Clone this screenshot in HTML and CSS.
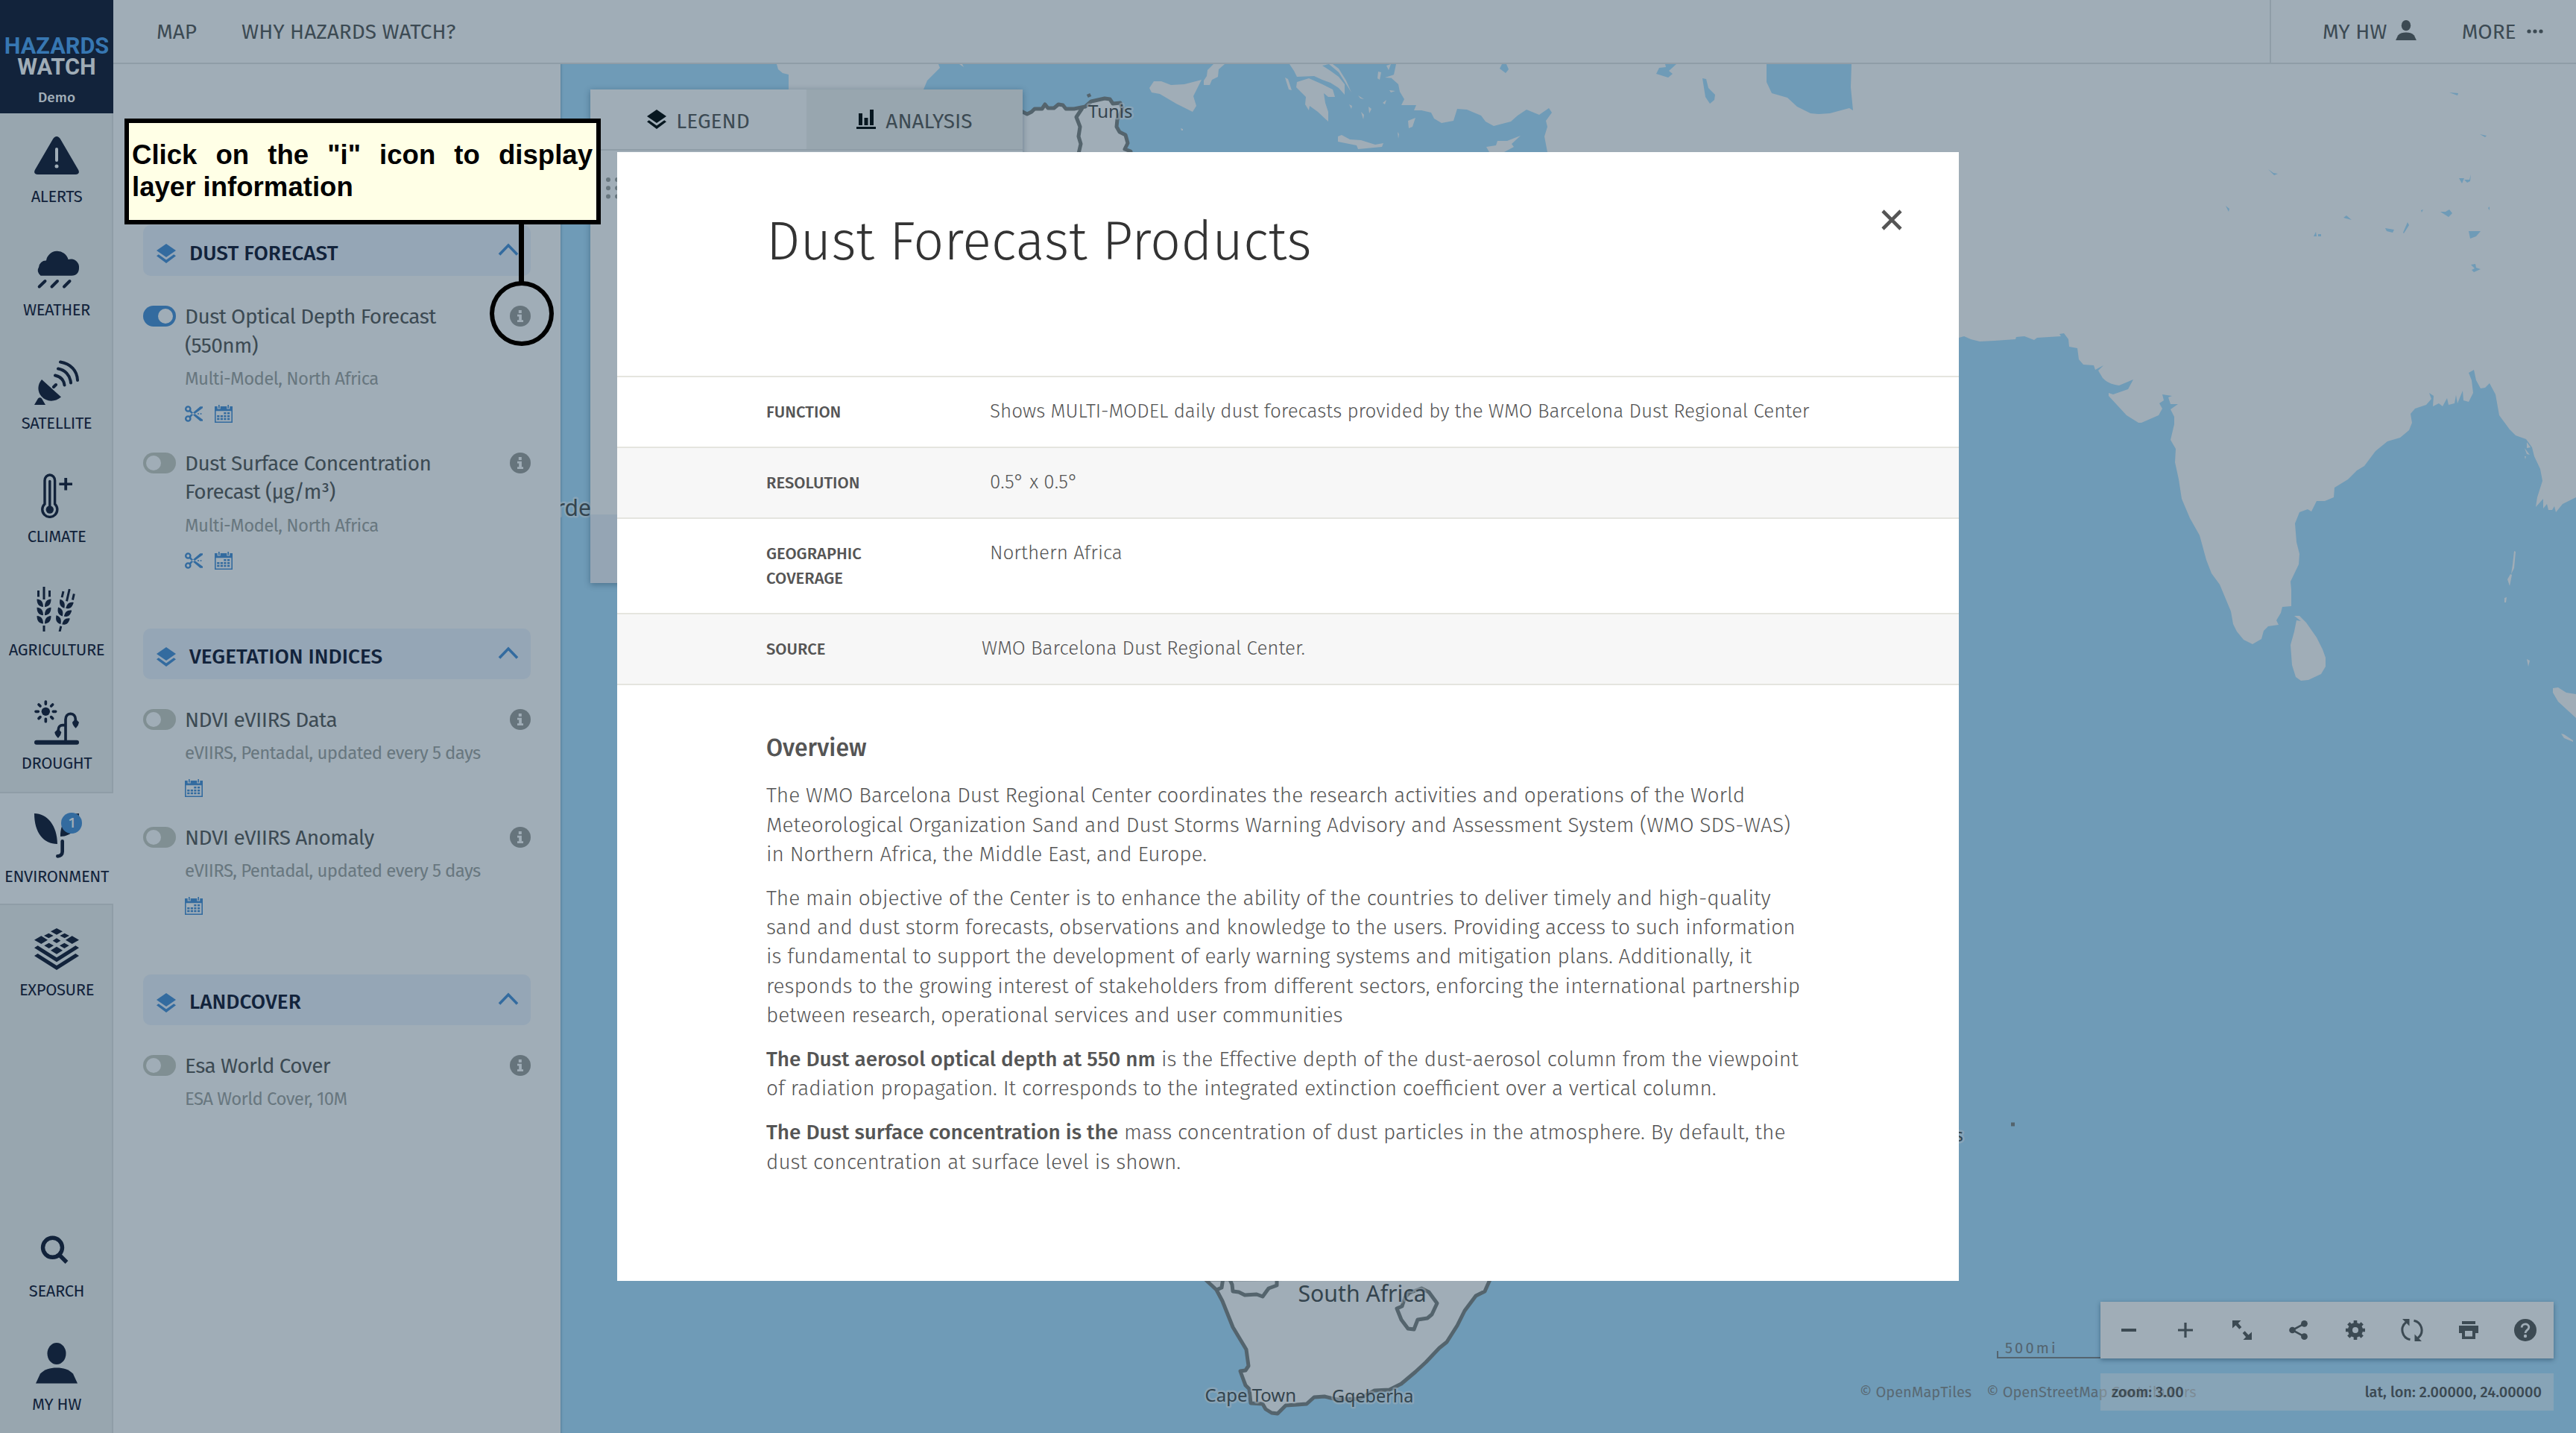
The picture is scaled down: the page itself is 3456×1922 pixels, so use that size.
FILE: index.html
```html
<!DOCTYPE html>
<html lang="en">
<head>
<meta charset="utf-8">
<title>Hazards Watch</title>
<link rel="stylesheet" href="styles.css">
</head>
<body>
<svg class="defs" aria-hidden="true">
  <symbol id="i-layers" viewBox="0 0 26 26"><path d="M13 0 26 9 13 18 0 9Z"/><path d="M0 16.3 2.8 14.3 13 21.6 23.2 14.3 26 16.3 13 26Z"/></symbol>
  <symbol id="i-chev" viewBox="0 0 28 18"><path d="M2 15.500 14 3 26 15.500" fill="none" stroke="currentColor" stroke-width="3.600"/></symbol>
  <symbol id="i-info" viewBox="0 0 28 28"><circle cx="14" cy="14" r="14"/><path class="cut" d="M11.800 6h4v4h-4zM10 11.800h5.900v7.400H18V22h-8v-2.800h2.200v-4.700H10z"/></symbol>
  <symbol id="i-cal" viewBox="0 0 24 24"><path fill-rule="evenodd" d="M0 2h3.700v3.600h4V2h8.600v3.600h4V2H24v22H0ZM1.600 8.300v14.100h20.800V8.300Z"/><path d="M5 0h1.600v4.500H5zM17.400 0H19v4.500h-1.600zM12.300 10h3.200v2.600h-3.200zM17 10h3.200v2.600H17zM3.200 13.900h3.200v2.600H3.200zM7.800 13.900H11v2.600H7.800zM12.300 13.900h3.200v2.600h-3.200zM17 13.900h3.200v2.600H17zM3.200 17.700h3.200v2.600H3.200zM7.800 17.700H11v2.600H7.800zM12.300 17.700h3.200v2.600h-3.200zM17 17.700h3.200v2.600H17z"/></symbol>
  <symbol id="i-cut" viewBox="0 0 24 24"><g fill="none" stroke="currentColor" stroke-width="2.400"><circle cx="4.300" cy="5.500" r="3.100"/><circle cx="4.300" cy="18.500" r="3.100"/></g><path d="M5.500 8.700 20.500 21.700H24v-2L9.500 9.200 7.500 6.200ZM5.500 15.300 20.500 2.300H24v2L9.500 14.800 7.500 17.800Z"/><path d="M17 11.200h2v1.600h-2zM20.500 11.200h2v1.600h-2z"/></symbol>
  <symbol id="i-user" viewBox="0 0 60 60"><ellipse cx="30" cy="16.500" rx="12.500" ry="14.500"/><path d="M2 56.500 8 43.500C14 37.500 21 35.500 30 35.500S46 37.500 52 43.500L58 56.500Z"/></symbol>
  <symbol id="i-wheat" viewBox="0 0 26 60"><path d="M11.500 0h3v17h-3zM11.500 52h3v8h-3zM4 5h3v8.500H4zM19 5h3v8.500h-3z"/><path id="ear" d="M3.500 16.500c6 .5 8.500 4 8.500 10.500-6-.5-8.500-4-8.500-10.500zM22.500 16.500c-6 .5-8.500 4-8.500 10.500 6-.5 8.500-4 8.500-10.500z"/><use href="#ear" y="11.200"/><use href="#ear" y="22.400"/></symbol>
</svg>

<div class="app">
  <nav class="rail">
    <div class="logo"><span class="logo-a">HAZARDS</span><span class="logo-b">WATCH</span><span class="logo-c">Demo</span></div>
    <a class="rail-item"><svg viewBox="0 0 60 60"><path d="M30 4q3 0 5 3.500L59.200 49q2.500 6-4 6H4.800q-6.500 0-4-6L25 7.500Q27 4 30 4z"/><path class="cut" d="M28 21q0-2 2-2t2 2v15q0 2-2 2t-2-2z"/><circle class="cut" cx="30" cy="44" r="2.500"/></svg><span>ALERTS</span></a>
    <a class="rail-item"><svg viewBox="0 0 60 60"><path d="M8.500 38.700A8.300 8.300 0 0 1 6 27.500 9.500 9.500 0 0 1 16 18.500 15 14.500 0 0 1 45.500 17 11 11 0 0 1 60 28.500C60 34 57 38.700 50 38.700Z"/><path class="ln w4" d="M14.500 46 6.700 53.500M31 46 23.500 53.500M47.500 46 40 53.500"/></svg><span>WEATHER</span></a>
    <a class="rail-item"><svg viewBox="0 0 60 60"><path d="M10 26 36 49.500C27 57 16 56 9.500 48.500 4 42 4 33 10 26ZM0 60 5 51.500Q7.500 49 10 51.500L15 60Z"/><path class="ln w4" d="M35 2.500C49 5 57.500 14 58 27M32 11.500c9 1.500 16 8.500 17 19M28 20.500c7 1.500 11.500 6 12.500 13M26 36 29 33"/></svg><span>SATELLITE</span></a>
    <a class="rail-item"><svg viewBox="0 0 60 60"><path class="ln w35" d="M14 41V9.500a6.800 7.500 0 0 1 13.600 0V41a10 10 0 1 1-13.600 0Z"/><circle cx="20.800" cy="48.500" r="5.200"/><path class="ln w35" d="M20.800 48V10.500"/><path d="M40.300 6h3.800v6.500H51v3.500h-6.900v6.500h-3.800V16h-6.900v-3.500h6.900z"/></svg><span>CLIMATE</span></a>
    <a class="rail-item"><svg viewBox="0 0 60 60"><use href="#i-wheat" width="26" height="60"/><g transform="translate(34 60.500) rotate(13)"><use href="#i-wheat" x="-13" y="-59" width="26" height="59"/></g></svg><span>AGRICULTURE</span></a>
    <a class="rail-item"><svg viewBox="0 0 180 180"><circle cx="46" cy="46" r="17"/><path class="ln w11" d="M46 6v10M46 76v10M6 46h10M76 46h10M18 18l6 6M68 68l6 6M18 74l6-6M68 24l6-6"/><path class="ln w18" d="M9 170h162"/><path class="ln w11" d="M126 165V78c0-14 8-23 20-23s20 9 20 23v10M126 101h-12c-10 0-17 7-17 17v10"/><path d="M166 76 180 89Q179 101 167 113 154 101 153 89ZM96 116 109 129Q108 141 96 153 83 141 82 129Z"/></svg><span>DROUGHT</span></a>
    <a class="rail-item active"><svg viewBox="0 0 180 180"><path d="M0 0C52 0 93 50 93 123 38 123 0 78 0 0ZM105 93C105 36 134 0 180 0 180 58 150 93 105 93Z"/><path class="ln w14" d="M113 112v42c0 12-8 18-19 18"/></svg><b class="badge">1</b><span>ENVIRONMENT</span></a>
    <a class="rail-item"><svg viewBox="0 0 180 180"><path d="M90 6 114 19 90 32 66 19ZM58 26 77 36 58 46 39 36ZM122 26 141 36 122 46 103 36ZM28 37 54 53 28 69 0 53ZM152 37 180 53 152 69 126 53ZM90 46 106 56 90 66 74 56ZM59 65 78 76 59 87 40 76ZM121 65 140 76 121 87 102 76ZM90 80 114 95 90 110 66 95ZM0 85 14 76 90 124 166 76 180 85 90 142ZM0 117 14 108 90 156 166 108 180 117 90 174Z"/></svg><span>EXPOSURE</span></a>
    <div class="rail-gap"></div>
    <a class="rail-item"><svg viewBox="0 0 60 60"><circle class="ln w55" cx="24.500" cy="26.300" r="13"/><path class="ln w55 butt" d="M34 36.500 43.500 46"/></svg><span>SEARCH</span></a>
    <a class="rail-item"><svg viewBox="0 0 60 60"><use href="#i-user"/></svg><span>MY HW</span></a>
  </nav>

  <div class="main">
    <header class="topbar">
      <a>MAP</a><a>WHY HAZARDS WATCH?</a>
      <div class="topbar-right">
        <a>MY HW <svg class="t-user" viewBox="2 2 56 54.500"><use href="#i-user" width="60" height="60"/></svg></a>
        <a class="more">MORE <svg class="t-dots" viewBox="0 0 22 6"><circle cx="3" cy="3" r="2.600"/><circle cx="11" cy="3" r="2.600"/><circle cx="19" cy="3" r="2.600"/></svg></a>
      </div>
    </header>

    <div class="work">
      <aside class="panel">
        <h2 class="group"><svg class="g-ic"><use href="#i-layers"/></svg>DUST FORECAST<svg class="g-ch"><use href="#i-chev"/></svg></h2>
        <div class="layer"><i class="toggle on"></i><div class="layer-body"><h3>Dust Optical Depth Forecast (550nm)</h3><p>Multi-Model, North Africa</p><div class="tools"><svg><use href="#i-cut"/></svg><svg><use href="#i-cal"/></svg></div></div><svg class="info"><use href="#i-info"/></svg></div>
        <div class="layer"><i class="toggle"></i><div class="layer-body"><h3>Dust Surface Concentration Forecast (µg/m³)</h3><p>Multi-Model, North Africa</p><div class="tools"><svg><use href="#i-cut"/></svg><svg><use href="#i-cal"/></svg></div></div><svg class="info"><use href="#i-info"/></svg></div>
        <h2 class="group"><svg class="g-ic"><use href="#i-layers"/></svg>VEGETATION INDICES<svg class="g-ch"><use href="#i-chev"/></svg></h2>
        <div class="layer"><i class="toggle"></i><div class="layer-body"><h3>NDVI eVIIRS Data</h3><p>eVIIRS, Pentadal, updated every 5 days</p><div class="tools"><svg><use href="#i-cal"/></svg></div></div><svg class="info"><use href="#i-info"/></svg></div>
        <div class="layer"><i class="toggle"></i><div class="layer-body"><h3>NDVI eVIIRS Anomaly</h3><p>eVIIRS, Pentadal, updated every 5 days</p><div class="tools"><svg><use href="#i-cal"/></svg></div></div><svg class="info"><use href="#i-info"/></svg></div>
        <h2 class="group"><svg class="g-ic"><use href="#i-layers"/></svg>LANDCOVER<svg class="g-ch"><use href="#i-chev"/></svg></h2>
        <div class="layer"><i class="toggle"></i><div class="layer-body"><h3>Esa World Cover</h3><p>ESA World Cover, 10M</p></div><svg class="info"><use href="#i-info"/></svg></div>
      </aside>

      <section class="map">
        <svg class="map-canvas" viewBox="752 86 2704 1836">
          <g class="land">
            <path d="M1873 86 1870 100 1867 105 1876 113 1878 123 1884 133 1880 141 1900 141 1897 148 1907 148 1920 151 1924 159 1934 165 1950 162 1955 146 1968 147 1987 155 1993 163 2004 169 2027 163 2036 155 2048 147 2065 154 2078 145 2082 151 2074 162 2076 170 2072 183 2076 204 2200 400 2628 453 2635 451 2644 455 2656 458 2676 457 2704 455 2705 452 2716 451 2729 456 2733 453 2765 451 2763 448 2769 447 2775 455 2776 465 2787 467 2789 482 2795 489 2809 490 2811 496 2822 490 2815 497 2821 507C2828 514 2835 516 2843 517L2862 509 2855 522 2835 529 2829 527 2829 531 2853 557 2869 567 2873 567 2896 557 2901 548 2897 541 2903 537 2901 529 2914 531 2909 533 2912 542 2922 542 2912 549 2917 559 2917 569 2912 590 2919 602 2918 620 2923 643 2927 669 2938 695 2951 718 2960 751 2967 769 2978 784 2993 820 2996 837 3001 847 3010 858 3022 864 3034 857 3037 846 3043 840 3057 838 3054 832 3060 822 3062 814 3074 813 3074 791 3073 780 3084 757 3085 743 3081 727 3079 702 3085 687 3096 683 3101 686 3108 672 3119 672 3131 667 3132 654 3150 643 3162 631 3172 625 3187 605 3203 592 3220 587 3232 577 3236 567 3234 555 3240 548 3255 543 3262 535 3259 527 3265 531 3264 545 3272 541 3277 545 3283 534 3285 543 3293 541 3295 530 3297 541 3304 524 3305 537 3312 539 3318 527 3316 510 3312 500 3319 496 3322 510 3328 521 3334 520 3340 514 3348 529 3353 557 3367 576 3375 584 3389 589 3397 600 3400 612 3408 629 3411 645 3404 667 3402 680 3412 669 3412 682 3417 676 3419 684 3424 684 3427 679 3429 687 3438 676 3456 667V86Z"/>
            <path d="M3078 826 3085 826 3094 835 3108 855 3116 871 3120 882 3120 894 3114 904 3097 912 3087 913 3080 908 3075 892 3073 865 3078 847 3081 832 3087 833Z"/>
            <path d="M3373 739 3375 740 3373 762 3369 770 3371 757ZM3368 770 3370 771 3367 786 3364 777ZM3360 802 3363 801 3362 808H3360ZM3390 884 3394 886 3392 894ZM3390 593 3395 600 3390 601ZM3387 601 3394 610 3390 609ZM3387 612 3389 612 3388 616ZM3425 923 3432 922 3443 929 3456 931V963L3432 941 3425 929ZM3436 984 3440 985 3452 993V995L3440 990Z"/>
            <path d="M1994 197 2007 195 2009 189 2022 189 2040 182 2028 193 2031 197 2018 204H1998ZM1795 183 1800 181 1811 187 1826 188 1845 194 1856 192 1854 197 1822 200 1820 195 1795 190ZM1542 118 1548 109 1558 109 1571 114 1589 113 1612 107 1601 129 1605 142 1600 150 1578 139 1556 126 1545 124ZM1628 86H1643L1635 93 1634 103 1626 107 1623 114 1615 114 1615 108 1619 102 1620 94Z"/>
            <path d="M1730 86 1736 95 1740 103 1763 102 1774 107 1785 111 1796 118 1804 127 1804 113 1796 103 1785 95 1774 88 1783 86ZM1740 110 1756 105 1774 113 1788 120 1791 130 1782 130 1776 125 1778 138 1782 150 1782 163 1768 150 1757 142 1756 148 1751 140 1752 130 1739 117ZM1783 86 1796 97 1803 108 1813 124 1806 108 1796 92 1788 86ZM1724 104 1728 106 1733 121 1729 120ZM1849 96 1853 97 1851 107 1848 105ZM1858 104 1874 99 1872 105ZM1864 121 1872 122 1866 124ZM1889 162 1899 158 1895 170 1890 172ZM1875 177 1877 180 1876 186ZM1822 128 1830 133 1825 132ZM1836 143 1840 146 1837 152ZM1810 140 1814 142 1813 146ZM1826 150 1830 154 1829 160ZM1855 138 1860 134 1858 140ZM1860 88 1866 86 1863 94ZM1584 172 1587 173 1587 175 1585 175Z"/>
            <path d="M1042 86 1044 93 1050 98 1058 100 1058 120 1239 120 1244 108 1261 91 1259 86ZM1287 86H1291L1293 90Z"/>
          </g>
          <g class="land edge">
            <path d="M1368 148 1378 153 1384 150 1388 146 1398 146 1402 140 1406 145 1414 145 1420 140 1426 141 1430 146 1441 146 1456 143 1464 136 1482 132 1489 133 1493 139 1503 138 1506 147 1499 160 1498 170 1502 177 1510 181 1513 192 1509 200 1517 203V210H1368Z"/>
            <path d="M1617 1716 1632 1730 1640 1745 1646 1760 1654 1780 1672 1810 1675 1832 1671 1838 1664 1839 1668 1850 1671 1858 1676 1863 1678 1882 1694 1883 1698 1890 1706 1895 1714 1896 1725 1885 1740 1884 1753 1883 1763 1874 1777 1873 1793 1877 1824 1876 1844 1865 1864 1864 1880 1856 1899 1840 1913 1827 1931 1808 1941 1800 1955 1778 1965 1758 1980 1738 1992 1732 2000 1714Z"/>
            <path d="M1885 1740 1891 1734 1907 1728 1917 1733 1928 1748 1921 1763 1915 1768 1902 1770 1897 1783 1889 1782 1880 1770 1874 1755 1881 1752Z"/>
            <path d="M1452 145 1444 157 1449 170 1447 183 1450 193 1447 206M1632 1730 1639 1727 1641 1714M1649 1714 1653 1723 1654 1732 1662 1733 1670 1737 1686 1736 1694 1739 1702 1728 1713 1724 1713 1714M1460 126 1462 130"/>
          </g>
          <g class="water">
            <path d="M2370 86 2370 110 2377 125 2398 131 2411 143 2429 152 2440 153 2455 152 2481 145 2486 148 2483 117 2484 86ZM2284 105 2289 106 2292 118 2301 127 2300 134 2294 139 2288 130ZM2226 91 2235 90 2234 86H2249L2239 95 2244 99 2238 104 2222 99ZM2015 86 2012 92 2020 98 2024 93 2021 86Z"/>
            <path d="M3286 124 3298 125 3297 128ZM3327 180 3336 182 3334 184ZM3043 227 3050 232 3056 233 3051 235ZM3299 239 3306 239 3303 246ZM3306 241 3313 241 3315 234 3314 243 3310 245ZM2986 276 2991 280 2990 284ZM3274 284 3281 284 3286 281 3290 286 3285 291ZM3144 292 3148 289 3155 295ZM3200 306 3212 308 3210 312 3202 310ZM3224 312 3230 298 3232 302 3225 313ZM3104 317 3107 311 3108 317ZM3110 314H3114V317H3110ZM3312 310 3328 310 3322 317 3314 320ZM3315 355 3321 354 3322 359 3328 361 3319 365 3316 362 3320 360ZM3338 279 3340 277 3340 282ZM3248 282 3251 281 3249 285Z"/>
          </g>
          <path class="edge" d="M2698 1508h5"/>
          <g class="labels">
            <text x="1741.500" y="1746" font-size="30.200">South Africa</text>
            <text x="1616.500" y="1880" font-size="24">Cape Town</text>
            <text x="1787" y="1881" font-size="23.400">Gqeberha</text>
            <text x="1460" y="157.500" font-size="24">Tunis</text>
            <text x="793" y="692" font-size="30" text-anchor="end">rde</text>
            <text x="2634" y="1531" font-size="24" text-anchor="end">s</text>
          </g>
        </svg>

        <div class="legend">
          <div class="tabs">
            <div class="tab"><svg><use href="#i-layers"/></svg>LEGEND</div>
            <div class="tab off"><svg viewBox="0 0 26 26"><path d="M0 23h26v3H0zM3 5h5v16H3zM10.500 11h5v10h-5zM18 0h5v21h-5z"/></svg>ANALYSIS</div>
          </div>
          <div class="legend-body"><svg class="grip" viewBox="0 0 30 30"><circle cx="3" cy="3" r="3"/><circle cx="15" cy="3" r="3"/><circle cx="3" cy="14.200" r="3"/><circle cx="15" cy="14.200" r="3"/><circle cx="3" cy="25.500" r="3"/><circle cx="15" cy="25.500" r="3"/></svg></div>
          <div class="legend-foot"></div>
        </div>

        <div class="attrib"><span>© OpenMapTiles</span><span>© OpenStreetMap Contributors</span></div>
        <div class="scale">500mi</div>
        <div class="controls">
          <div class="buttons">
            <svg viewBox="0 0 30 30"><path d="M5 13h20v4H5z"/></svg>
            <svg viewBox="0 0 30 30"><path d="M5 13.400h8.400V5h3.200v8.400H25v3.200h-8.400V25h-3.200v-8.400H5z"/></svg>
            <svg viewBox="0 0 30 30"><path d="M2 2h11.500l-3.700 3.700 4.500 5.300-3 2.700L6.500 8.500 2 12.500zM28 28H16.500l3.700-3.700-4.500-5.300 3-2.700 4.800 5.200 4.500-4z"/></svg>
            <svg viewBox="0 0 30 30"><circle cx="6.500" cy="15" r="4.300"/><circle cx="22.500" cy="6.300" r="4.400"/><circle cx="22.500" cy="23.700" r="4.400"/><path d="M22.500 6.300 6.500 15l16 8.700" fill="none" stroke="currentColor" stroke-width="2.600"/></svg>
            <svg viewBox="0 0 30 30"><circle cx="15" cy="15" r="7" fill="none" stroke="currentColor" stroke-width="6"/><path d="M15 2v5M15 23v5M2 15h5M23 15h5M5.800 5.800l3.500 3.500M20.700 20.700l3.500 3.500M5.800 24.200l3.500-3.500M20.700 9.300l3.500-3.500" stroke="currentColor" stroke-width="4.600"/></svg>
            <svg viewBox="0 0 30 30"><path d="M12.500 27.800A13.200 13.200 0 0 1 7 4.500M17.500 2.200A13.200 13.200 0 0 1 23 25.500" fill="none" stroke="currentColor" stroke-width="3"/><path d="M2 0h9.500v9.500L8.500 6.500ZM28 30h-9.500v-9.500l3 3Z"/></svg>
            <svg viewBox="0 0 30 30"><path fill-rule="evenodd" d="M6 3h18v4H6zM2 9h26v10h-4v8H6v-8H2zM10 16v7.500h10V16Z"/></svg>
            <svg viewBox="0 0 30 30"><circle cx="15" cy="15" r="15"/><path class="cutln" d="M10.200 11.500c0-6 9.600-6 9.600-.3 0 3.500-4.800 3.800-4.800 7.800"/><circle class="cut" cx="15" cy="23" r="2.200"/></svg>
          </div>
          <div class="coords"><span>zoom: 3.00</span><span>lat, lon: 2.00000, 24.00000</span></div>
        </div>
      </section>
    </div>
  </div>
</div>

<div class="modal">
  <svg class="close" viewBox="0 0 30 30"><path d="M3 3 27 27M27 3 3 27"/></svg>
  <h1>Dust Forecast Products</h1>
  <dl class="meta">
    <div><dt>FUNCTION</dt><dd>Shows MULTI-MODEL daily dust forecasts provided by the WMO Barcelona Dust Regional Center</dd></div>
    <div><dt>RESOLUTION</dt><dd>0.5° x 0.5°</dd></div>
    <div><dt>GEOGRAPHIC COVERAGE</dt><dd>Northern Africa</dd></div>
    <div><dt>SOURCE</dt><dd class="tight">WMO Barcelona Dust Regional Center.</dd></div>
  </dl>
  <div class="overview">
    <h4>Overview</h4>
    <p>The WMO Barcelona Dust Regional Center coordinates the research activities and operations of the World Meteorological Organization Sand and Dust Storms Warning Advisory and Assessment System (WMO SDS-WAS) in Northern Africa, the Middle East, and Europe.</p>
    <p>The main objective of the Center is to enhance the ability of the countries to deliver timely and high-quality sand and dust storm forecasts, observations and knowledge to the users. Providing access to such information is fundamental to support the development of early warning systems and mitigation plans. Additionally, it responds to the growing interest of stakeholders from different sectors, enforcing the international partnership between research, operational services and user communities</p>
    <p><strong>The Dust aerosol optical depth at 550 nm</strong> is the Effective depth of the dust-aerosol column from the viewpoint of radiation propagation. It corresponds to the integrated extinction coefficient over a vertical column.</p>
    <p><strong>The Dust surface concentration is the</strong> mass concentration of dust particles in the atmosphere. By default, the dust concentration at surface level is shown.</p>
  </div>
</div>

<div class="callout">Click on the "i" icon to display layer information</div>
<div class="leader"></div>
<div class="ring"></div>
</body>
</html>
```
FILE: styles.css
```css
:root {
  --surface: #a0adb7;
  --shade: #98a6af;
  --line: #8f9da7;
  --sea: #6f9bb7;
  --text: #3c4a53;
  --muted: #68777f;
  --navy: #12233b;
  --blue: #336b9f;
}
* { box-sizing: border-box; margin: 0; padding: 0; }
body {
  width: 3456px; height: 1922px; overflow: hidden; position: relative;
  font-family: "Fira Sans", "Noto Sans", sans-serif; color: var(--text);
}
svg { fill: currentColor; display: block; flex: none; }
.defs { position: absolute; width: 0; height: 0; }
.cut { fill: var(--surface); }
.cutln { fill: none; stroke: var(--surface); stroke-width: 2.8; }
.ln { fill: none; stroke: currentColor; stroke-linecap: round; }
.ln.butt { stroke-linecap: butt; }
.w35 { stroke-width: 3.4; } .w4 { stroke-width: 4; } .w55 { stroke-width: 5.4; }
.w11 { stroke-width: 11; } .w14 { stroke-width: 14; } .w18 { stroke-width: 18; }

.app { display: flex; height: 1922px; }

/* left rail */
.rail {
  width: 152px; display: flex; flex-direction: column; color: var(--navy);
  background: linear-gradient(to left, var(--line) 2px, var(--shade) 2px);
}
.logo {
  height: 152px; margin-bottom: -2px; background: var(--navy); color: var(--surface);
  display: flex; flex-direction: column; align-items: center; padding-top: 48px;
  font: 700 30.7px/28px Roboto, sans-serif; position: relative;
}
.logo-a { color: #3777b2; }
.logo-c { font: 500 19px/23px "Fira Sans", "Noto Sans", sans-serif; margin-top: 15px; }
.rail-item {
  height: 152px; padding-top: 29px; display: flex; flex-direction: column; align-items: center;
  position: relative; font-size: 22px; line-height: 26px; letter-spacing: -.4px; white-space: nowrap;
}
.rail-item svg { width: 60px; height: 60px; margin-bottom: 12px; }
.rail-item.active { background: var(--surface); border: solid var(--line); border-width: 2px 0; padding-top: 27px; }
.badge {
  position: absolute; left: 82px; top: 26px; width: 28px; height: 28px; border-radius: 50%;
  background: var(--blue); color: var(--surface); font: 500 18px/28px "Fira Sans", sans-serif; text-align: center;
}
.rail-gap { flex: 1; }

/* top bar */
.main { flex: 1; display: flex; flex-direction: column; }
.topbar {
  height: 86px; background: var(--surface); border-bottom: 2px solid var(--line);
  display: flex; align-items: center; padding: 1px 0 0 58px; gap: 60px;
  font-size: 28px; line-height: 34px;
}
.topbar a { display: flex; align-items: center; white-space: pre; }
.topbar-right { margin: -1px 0 0 auto; width: 411px; height: 84px; border-left: 2px solid var(--line); display: flex; padding: 2px 0 0 69px; }
.t-user { width: 28px; height: 27px; margin: -5px 0 0 4px; }
.more { margin-left: 61px; }
.t-dots { width: 22px; height: 6px; margin: -2px 0 0 7px; }

/* layer panel */
.work { flex: 1; display: flex; }
.panel { width: 600px; background: var(--surface); padding: 216px 40px 0; }
.group {
  height: 68px; border-radius: 10px; background: #95a6b6; color: var(--navy);
  display: flex; align-items: center; padding: 7px 16px 0 18px;
  font-size: 28px; font-weight: 500; line-height: 34px;
}
.g-ic { width: 26px; height: 26px; margin: 1px 18px 0 0; color: var(--blue); }
.g-ch { width: 28px; height: 18px; margin: -9px 0 0 auto; color: var(--blue); }
.layer { display: flex; align-items: flex-start; margin-top: 40px; }
.toggle { width: 44px; height: 28px; border-radius: 14px; background: #808f93; padding: 4px; flex: none; }
.toggle::before { content: ""; display: block; width: 20px; height: 20px; border-radius: 50%; background: var(--surface); }
.toggle.on { background: var(--blue); padding-left: 20px; }
.layer-body { flex: 1; margin: -3.9px 0 0 12px; }
.layer h3 { font-size: 28px; font-weight: 400; line-height: 38.7px; letter-spacing: -.57px; width: 360px; }
.layer p { font-size: 24px; line-height: 29px; letter-spacing: -.61px; margin-top: 10.6px; color: var(--muted); white-space: nowrap; }
.tools { display: flex; gap: 16px; margin-top: 20px; color: var(--blue); margin-bottom: -.6px; }
.tools svg { width: 24px; height: 24px; }
.info { width: 28px; height: 28px; color: #66747c; }
.layer + .group { margin-top: 80px; }

/* map */
.map { flex: 1; position: relative; background: var(--sea); overflow: hidden; box-shadow: inset 3px 0 3px -2px rgba(40, 70, 95, .35); }
.map-canvas { position: absolute; inset: 0; width: 2704px; height: 1836px; }
.land { fill: var(--surface); }
.edge { stroke: #54646d; stroke-width: 5; stroke-linejoin: round; }
.water { fill: var(--sea); }
.edge path:last-child { fill: none; }
.labels { font-family: "Noto Sans", sans-serif; fill: #34444e; stroke: rgba(160, 173, 183, .5); stroke-width: 5px; paint-order: stroke; stroke-linejoin: round; }
.legend {
  position: absolute; left: 40px; top: 34px; width: 580px; height: 662px; background: var(--surface);
  display: flex; flex-direction: column; box-shadow: 0 2px 8px rgba(20, 50, 75, .4);
}
.tabs { display: flex; height: 82px; border-bottom: 2px solid var(--line); }
.tab { flex: 1; display: flex; justify-content: center; align-items: center; font-size: 28px; line-height: 34px; padding-top: 6px; }
.tab svg { width: 26px; height: 26px; margin: -7px 13px 0 0; color: #071720; }
.tab.off { background: var(--shade); }
.legend-body { flex: 1; padding: 36px 0 0 21px; }
.grip { width: 30px; height: 30px; color: var(--muted); }
.legend-foot { height: 92px; background: #95a5b4; }

.attrib { position: absolute; left: 1743px; top: 1769px; display: flex; gap: 20px; font-size: 20px; line-height: 24px; color: #596973; }
.scale {
  position: absolute; left: 1927px; top: 1708px; width: 240px; height: 28px; padding: 3px 0 0 11px;
  font-size: 20px; line-height: 22px; letter-spacing: 3.1px; color: #54646f; border-bottom: 2px solid #54646f;
}
.scale::before { content: ""; position: absolute; left: 0; bottom: 0; width: 2px; height: 8px; background: #54646f; }
.controls { position: absolute; right: 30px; bottom: 30px; width: 608px; display: flex; flex-direction: column; gap: 20px; }
.buttons { height: 76px; background: var(--surface); display: flex; align-items: center; box-shadow: 0 2px 6px rgba(20, 50, 75, .45); }
.buttons svg { width: 30px; height: 30px; margin: 0 23px; }
.coords { height: 50px; background: rgba(160, 173, 183, .5); display: flex; justify-content: space-between; align-items: center; padding: 0 16px 0 15px; font-size: 20px; font-weight: 500; line-height: 24px; }

/* dialog */
.modal {
  position: absolute; left: 828px; top: 204px; width: 1800px; height: 1514px; background: #fff;
  padding-top: 77px; color: #555;
}
.close { position: absolute; left: 1695px; top: 76px; width: 30px; height: 30px; stroke: #555; stroke-width: 4.6; }
.modal h1 { font-size: 72px; font-weight: 300; line-height: 86px; color: #333; padding-left: 200px; }
.meta { margin-top: 137px; border-bottom: 2px solid #e5e5df; }
.meta > div { display: flex; padding: 30px 200px; border-top: 2px solid #e5e5df; }
.meta > div:nth-child(even) { background: #f7f7f7; }
.meta dt { width: 300px; padding-right: 130px; font-size: 22px; font-weight: 500; line-height: 33px; flex: none; }
.meta dd { font-size: 26px; font-weight: 300; line-height: 31px; white-space: nowrap; }
.meta dd.tight { margin-left: -11px; }
.overview { padding: 65px 0 0 200px; width: 1592px; }
.overview h4 { font-size: 32px; font-weight: 500; line-height: 38.4px; margin-bottom: 25px; }
.overview p { font-size: 28px; font-weight: 300; line-height: 39.2px; margin-bottom: 20px; }
.overview strong { font-weight: 500; letter-spacing: -.02px; }

/* tutorial annotation */
.callout {
  position: absolute; left: 167px; top: 159px; width: 639px; height: 142px; border: 6px solid #000; background: #ffffe6;
  padding: 21px 5px 0 4px; font: 700 36.6px/43px "Liberation Sans", Arial, sans-serif; color: #000; text-align: justify;
}
.leader { position: absolute; left: 696px; top: 300px; width: 7px; height: 80px; background: #000; }
.ring { position: absolute; left: 657px; top: 377px; width: 86px; height: 87px; border: 6px solid #000; border-radius: 50%; }
```
